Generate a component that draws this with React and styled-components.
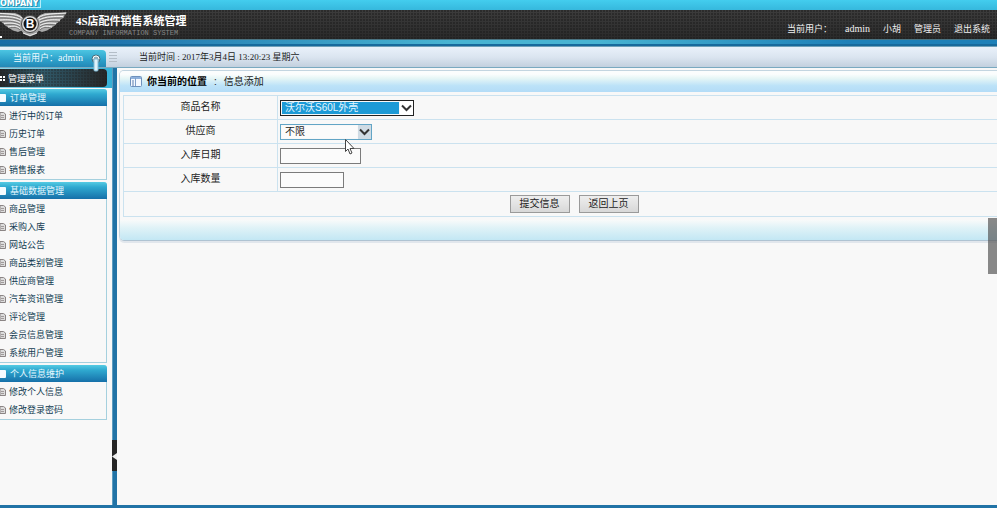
import styled, { createGlobalStyle } from "styled-components";

const GlobalStyle = createGlobalStyle`
  * {
    box-sizing: border-box;
  }

  body {
    margin: 0;
    background: #f8f8f8;
    font-family: "Liberation Sans", "Noto Sans CJK SC", sans-serif;
    font-size: 9px;
    color: #1c1c1c;
  }

  a {
    color: inherit;
    text-decoration: none;
  }

  button, input, select {
    font-family: inherit;
    font-size: 10px;
    color: inherit;
  }
`;

const Page = styled.div`
  position: relative;
  display: flex;
  flex-direction: column;
  min-height: 100vh;
  overflow: hidden;
  border-bottom: 3px solid #2173a6;
`;

const TopStrip = styled.div`
  height: 10px;
  background: linear-gradient(#43cdee, #36b8dd);
`;

const CompanyTag = styled.div`
  width: 41px;
  height: 8px;
  border-right: 1px solid #b5ecf8;
  border-bottom: 1px solid #b5ecf8;
  font: bold 8px/7px "DejaVu Sans", sans-serif;
  color: #fff;
  text-shadow: 1px 1px 0 #2a88a8;
`;

const Header = styled.header`
  display: flex;
  height: 29px;
  background:
    radial-gradient(circle at 1px 1px, #1c1c1c80 1px, transparent 1px) 0 0 / 3px 3px,
    linear-gradient(#3c3c3c, #2a2a2a);
`;

const Brand = styled.div`
  display: flex;
  flex: 1;
  gap: 1px;
`;

const BrandText = styled.div`
  padding-top: 3px;
`;

const Title = styled.h1`
  margin: 0;
  padding-left: 7px;
  font: bold 11px/16px "Liberation Serif", "Noto Sans CJK SC", serif;
  color: #fff;
`;

const Subtitle = styled.div`
  font: 7px/8px "Liberation Mono", monospace;
  color: #858585;
`;

const UserNav = styled.nav`
  display: flex;
  align-items: center;
  gap: 13px;
  padding: 9px 7px 0 0;
  line-height: 20px;
  color: #f0f0f0;
`;

const AdminName = styled.span`
  font-family: "Liberation Serif", serif;
  font-size: 10px;
`;

const BlueStrip = styled.div`
  height: 8px;
  border-top: 1px solid #4b7482;
  border-bottom: 1px solid #6fa0b8;
  background:
    linear-gradient(transparent 67%, #176a9c 67%),
    linear-gradient(90deg, #176ca6, #2076ae 12%, #48b4d2 45%, #48b4d2 60%, #1d80b8 85%);
`;

const StatusBar = styled.div`
  display: flex;
  align-items: center;
  height: 21px;
  border-bottom: 1px solid #79a9c0;
  background: linear-gradient(#e9f1fa, #dbe5f0 50%, #c2d0de);
`;

const UserTab = styled.div`
  position: relative;
  align-self: flex-end;
  width: 106px;
  height: 17px;
  padding-left: 13px;
  border-radius: 0 4px 0 0;
  background: linear-gradient(#4cc5e2, #2c9fc9 60%, #2488b6);
  line-height: 15px;
  color: #eefaff;
`;

const Knob = styled.svg`
  position: absolute;
  top: 4px;
  right: 5px;
  z-index: 1;
`;

const Clock = styled.div`
  padding-left: 20px;
  font-family: "Liberation Serif", "Noto Sans CJK SC", serif;
  line-height: 18px;
`;

const Body = styled.div`
  display: flex;
  flex: 1;
`;

const Sidebar = styled.aside`
  flex: none;
  width: 112px;
`;

const MenuHead = styled.div`
  height: 20px;
  padding: 1px 5px 0 0;
  background: linear-gradient(90deg, #8fd6e8, #35b0d6);
`;

const MenuTitle = styled.div`
  display: flex;
  align-items: center;
  gap: 3px;
  height: 18px;
  border-radius: 0 4px 4px 0;
  background:
    radial-gradient(circle at 1px 1px, #20202055 1px, transparent 1px) 0 0 / 3px 3px,
    linear-gradient(90deg, #24292c, #315968 40%, #2c4a56 60%, #262626);
  color: #fff;
`;

const Groups = styled.div`
  display: flex;
  flex-direction: column;
  gap: 2px;
  width: 107px;
  padding-top: 1px;
`;

const Group = styled.section`
  padding-bottom: 1px;
  border-right: 1px solid #a5d0de;
  border-bottom: 1px solid #a5d0de;
  border-radius: 0 4px 0 0;
`;

const GroupHead = styled.h2`
  display: flex;
  align-items: center;
  gap: 4px;
  height: 17px;
  margin: 0 -1px 0 0;
  border-radius: 0 3px 0 0;
  background: linear-gradient(#55cbe3, #2fa9d0 30%, #1670a9);
  font-size: 9px;
  font-weight: normal;
  color: #e6f8ff;
`;

const Square = styled.span`
  width: 6px;
  height: 8px;
  border-radius: 0 1px 1px 0;
  background: #f4fbff;
`;

const GroupList = styled.ul`
  margin: 0;
  padding: 0;
  list-style: none;
`;

const MenuItem = styled.li`
  display: flex;
  align-items: center;
  gap: 2px;
  height: 18px;
  color: #123c52;
`;

const Divider = styled.div`
  display: flex;
  flex: none;
  flex-direction: column;
  justify-content: flex-end;
  width: 5px;
  padding-bottom: 34px;
  border-left: 1px solid #5d9cbf;
  background: #2173a6;
`;

const Collapse = styled.button`
  width: 5px;
  height: 31px;
  margin-left: -1px;
  padding: 0;
  border: 0;
  background: #262626;

  svg {
    display: block;
  }
`;

const Main = styled.main`
  flex: 1;
  min-width: 0;
  padding: 2px 0 0 2px;
`;

/* The panel runs past the right edge of its frame. */
const Panel = styled.section`
  margin-right: -30px;
  border: 1px solid #c3d5e0;
  border-bottom: 1px solid #afc3d2;
  border-radius: 5px;
  box-shadow: 0 2px 0 #e1e6ec;
`;

const PanelHead = styled.div`
  display: flex;
  align-items: center;
  height: 21px;
  padding-left: 10px;
  border-radius: 4px 4px 0 0;
  background: linear-gradient(#fbfdfd 15%, #e6f6f6 35%, #bce2f8 70%, #b3dcf7);
  font-size: 10px;
  line-height: 18px;

  h2 {
    margin: 0 0 0 5px;
    font-size: 10px;
    color: #000;
  }

  span {
    margin-left: 7px;
  }
`;

const PanelFoot = styled.div`
  height: 20px;
  border-radius: 0 0 4px 4px;
  background: linear-gradient(#f8fafa, #dff2f7 40%, #c3e7f4);
`;

const PanelBody = styled.form`
  padding: 3px;
`;

const FormTable = styled.table`
  width: 100%;
  border-collapse: collapse;
  font-size: 10px;

  th,
  td {
    height: 24px;
    padding: 0 0 0 2px;
    border: 1px solid #cbe2ef;
    line-height: 16px;
  }

  th {
    width: 154px;
    padding: 0 0 2px;
    font-weight: normal;
  }
`;

const SelectBox = styled.div`
  position: relative;
  width: ${(props) => props.$width}px;
  height: 16px;

  svg {
    position: absolute;
    top: 1px;
    right: 1px;
    background: ${(props) => (props.$active ? "#fff" : "#cfdbe4")};
    pointer-events: none;
  }
`;

const Select = styled.select`
  display: block;
  appearance: none;
  width: 100%;
  height: 16px;
  padding: 1px 14px 1px 1px;
  border: 1px solid ${(props) => (props.$active ? "#222" : "#62a5c6")};
  border-radius: 0;
  outline: 0;
  background: ${(props) => (props.$active ? "#1c9ad6" : "#fbfbfb")} content-box;
  color: ${(props) => (props.$active ? "#e4f6ff" : "#222")};
  text-indent: 3px;
  line-height: 12px;
`;

const Input = styled.input`
  display: block;
  width: ${(props) => props.$width}px;
  height: 16px;
  padding: 0 2px;
  border: 1px solid #7b7b7b;
  background: #fbfbfb;
`;

const Actions = styled.div`
  display: flex;
  justify-content: center;
  gap: 9px;
  padding: 3px 0;
`;

const Button = styled.button`
  width: 60px;
  height: 18px;
  padding: 0;
  border: 1px solid #9a9a9a;
  background: linear-gradient(#eee, #d8d8d8);
  line-height: 14px;
`;

const ScrollThumb = styled.div`
  position: absolute;
  top: 218px;
  right: 0;
  width: 9px;
  height: 56px;
  background: #555555b0;
`;

const Pointer = styled.svg`
  position: absolute;
  top: 139px;
  left: 345px;
  pointer-events: none;
`;

const menu = [
  {
    title: "订单管理",
    items: ["进行中的订单", "历史订单", "售后管理", "销售报表"],
  },
  {
    title: "基础数据管理",
    items: [
      "商品管理",
      "采购入库",
      "网站公告",
      "商品类别管理",
      "供应商管理",
      "汽车资讯管理",
      "评论管理",
      "会员信息管理",
      "系统用户管理",
    ],
  },
  {
    title: "个人信息维护",
    items: ["修改个人信息", "修改登录密码"],
  },
];

function Wing() {
  return (
    <g>
      <path
        d="M6 9 L10 5 L15 3 L37 2.5 L34 6 L34.5 7 L30 10 L30 11 L26 14 L25.5 15 L21 18 L17 20.5 L12 22 L7 20Z"
        fill="#a9a9a9"
      />
      <path
        d="M10 8 C16 5 26 5 35 4.5 M10 11 C16 8 25 8 32 8 M10 14 C16 11 23 11 29 11.5 M10 17 C14 14 20 14 25 15 M10 20 C13 17 16 17 21 18"
        fill="none"
        stroke="#656565"
        strokeWidth="0.8"
      />
      <path
        d="M8 8 C14 3 25 4 36 3 M9 10 C16 6 25 6.5 33 6.5 M10 12.5 C16 9.5 23 9.5 30 10 M10 15.5 C15 12.5 21 13 26 13.5 M10 18.5 C14 15.5 17 16 22 17"
        fill="none"
        stroke="#f2f2f2"
        strokeWidth="1"
      />
    </g>
  );
}

function Logo() {
  return (
    <svg width="68" height="29" viewBox="0 0 68 29">
      <g transform="translate(30 0)">
        <Wing />
      </g>
      <g transform="translate(30 0) scale(-1 1)">
        <Wing />
      </g>
      <path d="M20 19 L24 24 L30 26.5 L36 24 L40 19Z" fill="#a2a2a2" />
      <path d="M23 23 L30 25.5 L37 23" fill="none" stroke="#e8e8e8" />
      <circle cx="30" cy="14" r="8.5" fill="#dedede" stroke="#4a4a4a" />
      <circle cx="30" cy="14" r="6.5" fill="#141414" />
      <text
        x="30"
        y="18"
        textAnchor="middle"
        fontFamily="Liberation Sans"
        fontWeight="bold"
        fontSize="12"
        fill="#fff"
      >
        B
      </text>
      <path d="M0 26h2v2H0z" fill="#fff" />
    </svg>
  );
}

function PageIcon() {
  return (
    <svg width="7" height="9" viewBox="0 0 7 9">
      <path d="M0 1.5h3.5L5.5 3v5.5H0z" fill="#dcdcdc" stroke="#8b8585" />
      <path d="M1 4.5h3M1 6.5h3" stroke="#a09a9a" />
    </svg>
  );
}

function Chevron() {
  return (
    <svg width="13" height="14" viewBox="0 0 13 14">
      <path d="M2 4.5l4.5 4.5L11 4.5" fill="none" stroke="#333" strokeWidth="2" />
    </svg>
  );
}

function SelectField({ id, width, active, options }) {
  return (
    <SelectBox $width={width} $active={active}>
      <Select id={id} $active={active}>
        {options.map((option) => (
          <option key={option}>{option}</option>
        ))}
      </Select>
      <Chevron />
    </SelectBox>
  );
}

function FormRow({ id, label, children }) {
  return (
    <tr>
      <th scope="row">
        <label htmlFor={id}>{label}</label>
      </th>
      <td>{children}</td>
    </tr>
  );
}

function App() {
  return (
    <>
      <GlobalStyle />
      <Page>
        <TopStrip>
          <CompanyTag>OMPANY</CompanyTag>
        </TopStrip>
        <Header>
          <Brand>
            <Logo />
            <BrandText>
              <Title>4S店配件销售系统管理</Title>
              <Subtitle>COMPANY INFORMATION SYSTEM</Subtitle>
            </BrandText>
          </Brand>
          <UserNav>
            <span>当前用户：</span>
            <AdminName>admin</AdminName>
            <span>小胡</span>
            <span>管理员</span>
            <a href="#logout">退出系统</a>
          </UserNav>
        </Header>
        <BlueStrip />

        <StatusBar>
          <UserTab>
            当前用户：<AdminName>admin</AdminName>
            <Knob width="10" height="19" viewBox="0 0 10 19">
              <circle cx="5" cy="5" r="4" fill="#8fb0bc" stroke="#476d7c" />
              <path d="M2 5a3 3 0 0 1 6 0" fill="none" stroke="#fff" />
              <rect x="3" y="5" width="4" height="12" rx="1" fill="#dff1fa" stroke="#80bcd8" />
            </Knob>
          </UserTab>
          <svg width="13" height="12" viewBox="0 0 13 12">
            <path d="M3 1.5h8M3 4.5h8M3 7.5h8M3 10.5h8" stroke="#b4bec8" />
          </svg>
          <Clock>当前时间 : 2017年3月4日 13:20:23 星期六</Clock>
        </StatusBar>

        <Body>
          <Sidebar>
            <MenuHead>
              <MenuTitle>
                <svg width="5" height="7" viewBox="0 0 5 7">
                  <path d="M0 1h2v2H0zM3 1h2v2H3zM0 4h2v2H0zM3 4h2v2H3z" fill="#fff" />
                </svg>
                管理菜单
              </MenuTitle>
            </MenuHead>
            <Groups>
              {menu.map((group) => (
                <Group key={group.title}>
                  <GroupHead>
                    <Square />
                    {group.title}
                  </GroupHead>
                  <GroupList>
                    {group.items.map((item) => (
                      <MenuItem key={item}>
                        <PageIcon />
                        <a href="#menu">{item}</a>
                      </MenuItem>
                    ))}
                  </GroupList>
                </Group>
              ))}
            </Groups>
          </Sidebar>

          <Divider>
            <Collapse aria-label="收起菜单">
              <svg width="5" height="31" viewBox="0 0 5 31">
                <path d="M0 16.5L5 13v7z" fill="#eee" />
              </svg>
            </Collapse>
          </Divider>

          <Main>
            <Panel>
              <PanelHead>
                <svg width="12" height="11" viewBox="0 0 12 11">
                  <rect x="0.5" y="0.5" width="11" height="10" rx="1" fill="#f4f9ff" stroke="#6e91bd" />
                  <path d="M1 2h10" stroke="#8fb2dc" strokeWidth="2" />
                  <path d="M5.5 2v8" stroke="#7fa0ca" />
                  <path d="M2 5h2M2 7h2M2 9h2" stroke="#5d7fae" />
                </svg>
                <h2>你当前的位置</h2>
                <span>:</span>
                <span>信息添加</span>
              </PanelHead>
              <PanelBody onSubmit={(e) => e.preventDefault()}>
                <FormTable>
                  <tbody>
                    <FormRow id="product" label="商品名称">
                      <SelectField id="product" width={134} active options={["沃尔沃S60L外壳"]} />
                    </FormRow>
                    <FormRow id="supplier" label="供应商">
                      <SelectField id="supplier" width={92} options={["不限"]} />
                    </FormRow>
                    <FormRow id="date" label="入库日期">
                      <Input id="date" $width={81} />
                    </FormRow>
                    <FormRow id="amount" label="入库数量">
                      <Input id="amount" $width={64} />
                    </FormRow>
                    <tr>
                      <td colSpan={2}>
                        <Actions>
                          <Button type="submit">提交信息</Button>
                          <Button type="button">返回上页</Button>
                        </Actions>
                      </td>
                    </tr>
                  </tbody>
                </FormTable>
              </PanelBody>
              <PanelFoot />
            </Panel>
          </Main>
        </Body>

        <ScrollThumb />
        <Pointer width="10" height="16" viewBox="0 0 10 16">
          <path
            d="M0.5 0.5V12.5L3 10L5 15L7 14L5 9.5H9Z"
            fill="#fff"
            stroke="#444"
          />
        </Pointer>
      </Page>
    </>
  );
}

export default App;
